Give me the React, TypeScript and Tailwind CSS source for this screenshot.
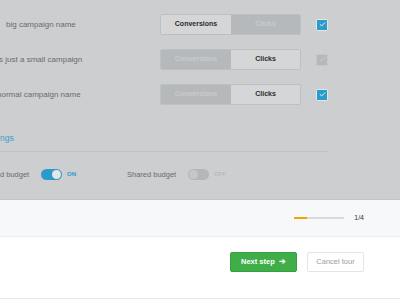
import { Check } from 'lucide-react'

type Row = { label: string; shift: string; active: 'conv' | 'clicks'; checked: boolean }

const rows: Row[] = [
  { label: 'big campaign name', shift: 'ml-[6px]', active: 'conv', checked: true },
  { label: 'This is just a small campaign', shift: 'ml-[-20px]', active: 'clicks', checked: false },
  { label: 'This is a normal campaign name', shift: 'ml-[-35px]', active: 'clicks', checked: true },
]

function Segmented({ active }: { active: 'conv' | 'clicks' }) {
  const on = 'bg-[#d5d6d7] text-[#2b2c2e]'
  const off = 'bg-[#b6b9bc] text-[#c9cbcd]'
  return (
    <div className="flex h-[21px] w-[141px] shrink-0 overflow-hidden rounded-[2px] border border-[#bdbfc1] text-[7px] font-bold">
      <div className={`flex w-[70px] items-center justify-center ${active === 'conv' ? on : off}`}>Conversions</div>
      <div className={`flex flex-1 items-center justify-center ${active === 'clicks' ? on : off}`}>Clicks</div>
    </div>
  )
}

function Toggle({ on }: { on: boolean }) {
  return (
    <div
      className={`flex h-[11px] w-[21px] items-center rounded-full px-[1px] ${
        on ? 'justify-end bg-[#2b9bcc]' : 'justify-start bg-[#b4b7ba]'
      }`}
    >
      <div className={`h-[9px] w-[9px] rounded-full ${on ? 'bg-[#e4e6e8]' : 'bg-[#c4c6c8]'}`} />
    </div>
  )
}

export default function App() {
  return (
    <div className="relative h-[300px] w-[400px] overflow-hidden bg-white font-['Liberation_Sans',Arial,sans-serif]">
      {/* dimmed content */}
      <div className="h-[200px] border-b border-[#c3c4c5] bg-[#cdcecf] pt-[14px]">
        <div className="flex flex-col gap-[14px]">
          {rows.map((r) => (
            <div key={r.label} className="flex h-[21px] items-center">
              <div className="w-[160px] shrink-0 overflow-visible">
                <span className={`block whitespace-nowrap text-[8px] text-[#6a6c6f] ${r.shift}`}>{r.label}</span>
              </div>
              <Segmented active={r.active} />
              <div
                className={`ml-[15px] flex h-[12px] w-[12px] items-center justify-center rounded-[1px] border ${
                  r.checked ? 'border-[#e3e5e6] bg-[#2b9bcc]' : 'border-[#c6c8ca] bg-[#b6b9bc]'
                }`}
              >
                <Check className={`h-[7px] w-[7px] ${r.checked ? 'text-white' : 'text-[#cdd0d2]'}`} strokeWidth={3} />
              </div>
            </div>
          ))}
        </div>

        <div className="mt-[28px] h-[10px] whitespace-nowrap text-[8.5px] leading-[10px] text-[#3a9fce]">
          <span className="ml-[-17px]">Settings</span>
        </div>
        <div className="mt-[8px] h-px w-[328px] bg-[#bfc1c3]" />

        <div className="mt-[17px] flex h-[11px] items-center text-[7.5px] text-[#6a6c6f]">
          <span className="ml-[-20px] w-[61px] whitespace-nowrap">Shared budget</span>
          <Toggle on />
          <span className="ml-[5px] w-[60px] text-[6px] font-bold text-[#2b9bcc]">ON</span>
          <span className="w-[61px] whitespace-nowrap">Shared budget</span>
          <Toggle on={false} />
          <span className="ml-[5px] text-[6px] text-[#b0b3b6]">OFF</span>
        </div>
      </div>

      {/* progress strip */}
      <div className="flex h-[37px] items-center justify-end gap-[10px] border-b border-[#eceef0] bg-[#f7f8fa] pr-[36px]">
        <div className="flex h-[2px] w-[50px] bg-[#d8dadc]">
          <div className="h-full w-[13px] bg-[#f0a500]" />
        </div>
        <span className="text-[7px] text-[#333538]">1/4</span>
      </div>

      {/* actions */}
      <div className="flex h-[62px] items-start justify-end gap-[10px] border-b border-[#e6e7e8] pr-[36px] pt-[15px]">
        <button
          type="button"
          className="flex h-[20px] w-[67px] items-center justify-between rounded-[2px] border border-[#36a040] bg-[#3fae49] px-[10px] text-[7.5px] font-bold text-white"
        >
          Next step
          <span className="text-[8px] font-bold">➔</span>
        </button>
        <button
          type="button"
          className="flex h-[20px] w-[57px] items-center justify-center rounded-[2px] border border-[#e2e4e6] bg-white text-[7.5px] text-[#9a9c9f]"
        >
          Cancel tour
        </button>
      </div>
    </div>
  )
}
